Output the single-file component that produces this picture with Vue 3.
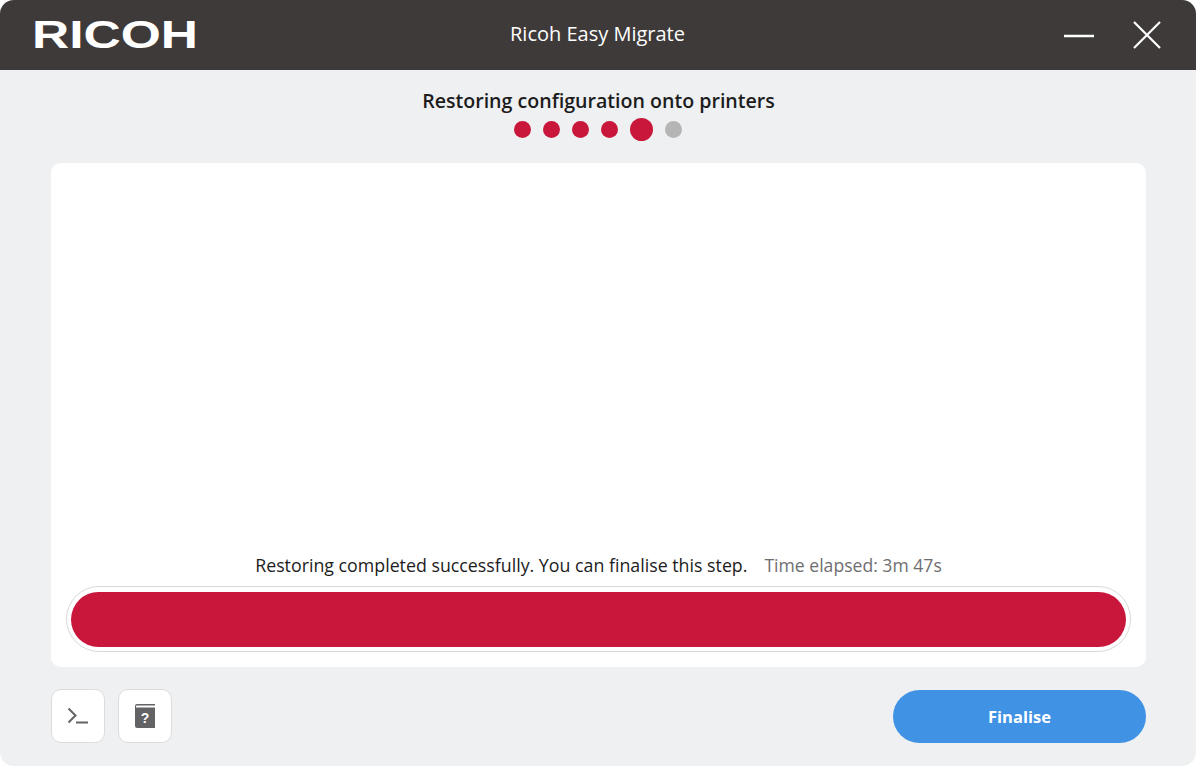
<script setup>
import { ref } from "vue";

const steps = ref(["done", "done", "done", "done", "current", "todo"]);
</script>

<template>
  <div class="window">
    <header class="titlebar">
      <svg class="logo" width="166" height="40" viewBox="0 0 166 40">
        <text
          x="0"
          y="33"
          textLength="166"
          lengthAdjust="spacingAndGlyphs"
          class="logo-text"
        >RICOH</text>
      </svg>
      <span class="app-name">Ricoh Easy Migrate</span>
      <div class="window-buttons">
        <svg width="30" height="30" viewBox="0 0 30 30">
          <path d="M0 16H30" stroke="#fff" stroke-width="2.6" />
        </svg>
        <svg width="30" height="30" viewBox="0 0 30 30">
          <path d="M2 2L28 28M28 2L2 28" stroke="#fff" stroke-width="2.2" />
        </svg>
      </div>
    </header>

    <main class="content">
      <h1>Restoring configuration onto printers</h1>
      <div class="steps">
        <span v-for="(s, i) in steps" :key="i" class="dot" :class="s"></span>
      </div>

      <section class="card">
        <p class="status">
          <span>Restoring completed successfully. You can finalise this step.</span>
          <span class="elapsed">Time elapsed: 3m 47s</span>
        </p>
        <div class="track">
          <div class="fill" :style="{ width: '100%' }"></div>
        </div>
      </section>

      <footer class="actions">
        <button class="icon-btn" aria-label="Console">
          <svg width="22" height="18" viewBox="0 0 22 18">
            <path d="M1.5 1.5L8.5 8.5L1.5 15.5" fill="none" stroke="#636366" stroke-width="2" />
            <path d="M9 15.6H21" stroke="#636366" stroke-width="2" />
          </svg>
        </button>
        <button class="icon-btn" aria-label="Help">
          <svg width="22" height="26" viewBox="0 0 22 26">
            <path d="M3 1H21V2.5H3Q1.5 2.5 2 4.5H21V25H3Q1 25 1 23V3Q1 1 3 1Z" fill="#636366" />
            <text x="11" y="19.5" class="help-mark">?</text>
          </svg>
        </button>
        <button class="primary">Finalise</button>
      </footer>
    </main>
  </div>
</template>

<style scoped>
.window {
  width: 1196px;
  height: 766px;
  display: flex;
  flex-direction: column;
  background: #eff0f2;
  border-radius: 14px;
  overflow: hidden;
  font-family: "Open Sans", "Noto Sans", sans-serif;
  color: #1c1c1c;
}

.titlebar {
  position: relative;
  height: 70px;
  flex: none;
  display: flex;
  align-items: center;
  justify-content: space-between;
  padding: 0 34px 0 32px;
  background: #3e3a39;
}

.logo-text {
  font-family: "Liberation Sans", sans-serif;
  font-weight: 700;
  font-size: 38px;
  fill: #fff;
}

.app-name {
  position: absolute;
  left: 0;
  right: 1px;
  text-align: center;
  color: #fff;
  font-size: 20px;
  margin-top: -3px;
}

.window-buttons {
  display: flex;
  gap: 38px;
}

.content {
  flex: 1;
  display: flex;
  flex-direction: column;
  padding: 0 50px 23px 51px;
}

h1 {
  margin: 19px 0 0;
  font-size: 19.6px;
  line-height: 24px;
  font-weight: 600;
  text-align: center;
}

.steps {
  display: flex;
  justify-content: center;
  align-items: center;
  gap: 12px;
  height: 23px;
  margin: 5px 2px 0 0;
}

.dot {
  width: 17px;
  height: 17px;
  border-radius: 50%;
  background: #c9173c;
}

.dot.current {
  width: 23px;
  height: 23px;
}

.dot.todo {
  background: #b5b5b6;
}

.card {
  box-sizing: border-box;
  height: 504px;
  margin-top: 22px;
  display: flex;
  flex-direction: column;
  justify-content: flex-end;
  padding: 0 15px 15px;
  background: #fff;
  border-radius: 10px;
}

.status {
  margin: 0 0 9px;
  display: flex;
  justify-content: center;
  gap: 17px;
  font-size: 17.8px;
  line-height: 24px;
}

.elapsed {
  color: #6e6e70;
  font-size: 17.6px;
}

.track {
  height: 66px;
  box-sizing: border-box;
  padding: 5px 4px 4px;
  border: 1px solid #d8d8d9;
  border-radius: 33px;
}

.fill {
  height: 100%;
  border-radius: 28px;
  background: #c9173c;
}

.actions {
  display: flex;
  align-items: center;
  gap: 13px;
  margin-top: 22px;
}

.icon-btn {
  width: 54px;
  height: 54px;
  padding: 0;
  display: flex;
  align-items: center;
  justify-content: center;
  background: #fff;
  border: 1px solid #dcdcdd;
  border-radius: 10px;
}

.help-mark {
  font-family: "Liberation Sans", sans-serif;
  font-weight: 700;
  font-size: 14px;
  fill: #fff;
  text-anchor: middle;
}

.primary {
  margin-left: auto;
  width: 253px;
  height: 53px;
  border: none;
  border-radius: 27px;
  background: #3f92e4;
  color: #fff;
  font-family: inherit;
  font-size: 16.5px;
  font-weight: 700;
}
</style>

<style>
html,
body {
  background: #fff;
}
</style>
